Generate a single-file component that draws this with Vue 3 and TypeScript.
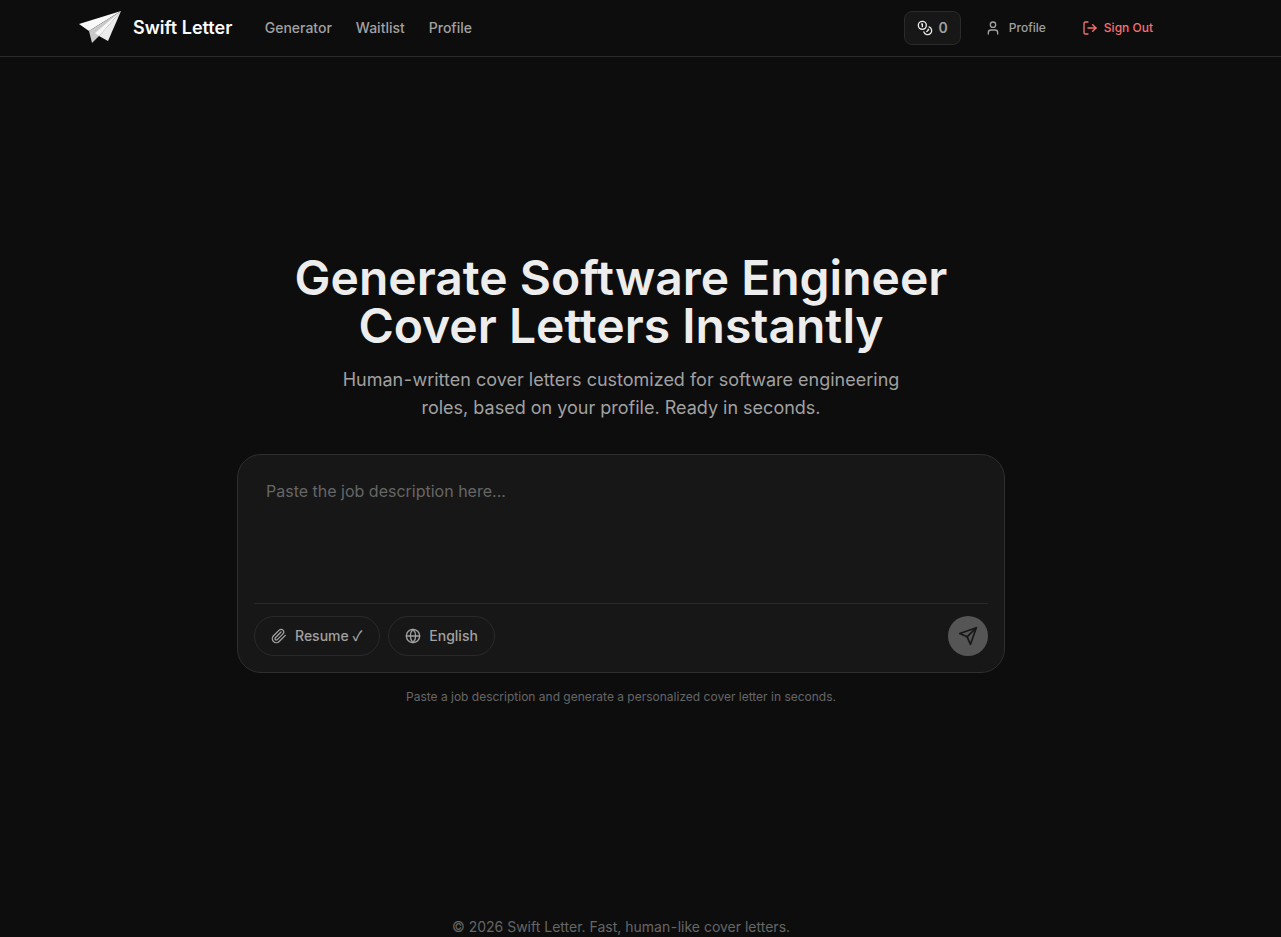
<script setup lang="ts">
const navLinks = ["Generator", "Waitlist", "Profile"];
</script>

<template>
  <div class="page">
    <header class="topbar">
      <div class="topbar-inner">
        <div class="brand">
          <svg class="logo" viewBox="0 0 48 34" width="48" height="34">
            <polygon points="2,13 44,0 12,20" fill="#fafafa" />
            <polygon points="44,0 12,20 15,32 22,25" fill="#c9c9c9" />
            <polygon points="44,0 22,25 31,30" fill="#ececec" />
            <polygon points="44,0 18,22 22,25" fill="#f6f6f6" />
          </svg>
          <span class="brand-name">Swift Letter</span>
        </div>
        <nav class="nav">
          <a v-for="link in navLinks" :key="link" class="nav-link">{{ link }}</a>
        </nav>
        <div class="actions">
          <div class="credits">
            <svg class="icon" viewBox="0 0 24 24" width="16" height="16">
              <circle cx="8" cy="8" r="6" />
              <path d="M18.09 10.37A6 6 0 1 1 10.34 18" />
              <path d="M7 6h1v4" />
              <path d="m16.71 13.88.7.71-2.82 2.82" />
            </svg>
            <span>0</span>
          </div>
          <a class="action-link">
            <svg class="icon" viewBox="0 0 24 24" width="16" height="16">
              <path d="M19 21v-2a4 4 0 0 0-4-4H9a4 4 0 0 0-4 4v2" />
              <circle cx="12" cy="7" r="4" />
            </svg>
            Profile
          </a>
          <a class="action-link danger">
            <svg class="icon" viewBox="0 0 24 24" width="16" height="16">
              <path d="M9 21H5a2 2 0 0 1-2-2V5a2 2 0 0 1 2-2h4" />
              <polyline points="16 17 21 12 16 7" />
              <line x1="21" y1="12" x2="9" y2="12" />
            </svg>
            Sign Out
          </a>
        </div>
      </div>
    </header>

    <main class="main">
      <h1 class="title">Generate Software Engineer<br />Cover Letters Instantly</h1>
      <p class="subtitle">
        Human<span class="hyphen">-</span>written cover letters customized for software engineering<br />
        roles, based on your profile. Ready in seconds.
      </p>

      <div class="composer">
        <textarea class="input" placeholder="Paste the job description here..."></textarea>
        <div class="toolbar">
          <button class="pill">
            <svg class="icon" viewBox="0 0 24 24" width="16" height="16">
              <path d="m21.44 11.05-9.19 9.19a6 6 0 0 1-8.49-8.49l8.57-8.57A4 4 0 1 1 18 8.84l-8.59 8.57a2 2 0 0 1-2.83-2.83l8.49-8.48" />
            </svg>
            <span>Resume <span class="tick">✓</span></span>
          </button>
          <button class="pill">
            <svg class="icon" viewBox="0 0 24 24" width="16" height="16">
              <circle cx="12" cy="12" r="10" />
              <path d="M12 2a14.5 14.5 0 0 0 0 20 14.5 14.5 0 0 0 0-20" />
              <path d="M2 12h20" />
            </svg>
            <span>English</span>
          </button>
          <button class="send">
            <svg class="icon" viewBox="0 0 24 24" width="20" height="20">
              <path d="m22 2-7 20-4-9-9-4Z" />
              <path d="M22 2 11 13" />
            </svg>
          </button>
        </div>
      </div>
      <p class="hint">Paste a job description and generate a personalized cover letter in seconds.</p>
    </main>

    <footer class="footer">© 2026 Swift Letter. Fast, human<span class="hyphen">-</span>like cover letters.</footer>
  </div>
</template>

<style>
html,
body {
  margin: 0;
  background: #0d0d0d;
}
</style>

<style scoped>
.page {
  height: 937px;
  overflow: hidden;
  display: flex;
  flex-direction: column;
  background: #0d0d0d;
  color: #ededed;
  font-family: Inter, "Liberation Sans", sans-serif;
}

.icon {
  fill: none;
  stroke: currentColor;
  stroke-width: 2;
  stroke-linecap: round;
  stroke-linejoin: round;
  flex-shrink: 0;
}

.topbar {
  height: 56px;
  flex-shrink: 0;
  border-bottom: 1px solid #2a2a2a;
}

.topbar-inner {
  width: 1242px;
  height: 100%;
  box-sizing: border-box;
  padding: 0 77px;
  display: flex;
  align-items: center;
}

.brand {
  display: flex;
  align-items: center;
  gap: 8px;
}

.logo {
  display: block;
}

.brand-name {
  font-size: 18px;
  line-height: 28px;
  font-weight: 600;
  color: #fafafa;
}

.nav {
  display: flex;
  gap: 24px;
  margin-left: 32.4px;
}

.nav-link {
  font-size: 14px;
  line-height: 20px;
  font-weight: 500;
  color: #a1a1a1;
}

.actions {
  margin-left: auto;
  display: flex;
  align-items: center;
  gap: 12px;
}

.credits {
  display: flex;
  align-items: center;
  gap: 6px;
  height: 34px;
  box-sizing: border-box;
  padding: 0 12px;
  border: 1px solid #2a2a2a;
  border-radius: 8px;
  background: #171717;
  font-size: 14px;
  line-height: 20px;
  font-weight: 600;
  color: #a1a1a1;
}

.credits .icon {
  color: #ededed;
}

.action-link {
  display: flex;
  align-items: center;
  gap: 8px;
  padding: 8px 12px;
  font-size: 12px;
  line-height: 16px;
  font-weight: 500;
  color: #a1a1a1;
}

.action-link.danger {
  gap: 6px;
  color: #f87171;
}

.main {
  width: 1242px;
  flex: 1;
  display: flex;
  flex-direction: column;
  align-items: center;
  padding-top: 197px;
  box-sizing: border-box;
}

.title {
  margin: 0;
  font-size: 48px;
  line-height: 48px;
  font-weight: 600;
  text-align: center;
  color: #ededed;
}

.subtitle {
  margin: 16px 0 0;
  font-size: 18px;
  line-height: 28px;
  text-align: center;
  color: #a1a1a1;
}

.hyphen {
  padding: 0 0.5px;
}

.composer {
  width: 768px;
  height: 219px;
  box-sizing: border-box;
  margin-top: 32px;
  padding: 16px;
  display: flex;
  flex-direction: column;
  background: #171717;
  border: 1px solid #2e2e2e;
  border-radius: 24px;
}

.input {
  flex: 1;
  resize: none;
  border: 0;
  outline: 0;
  background: transparent;
  padding: 8px 12px 12px;
  font-family: inherit;
  font-size: 16px;
  line-height: 24px;
  color: #ededed;
}

.input::placeholder {
  color: #666;
}

.toolbar {
  display: flex;
  align-items: center;
  gap: 8px;
  padding-top: 12px;
  border-top: 1px solid #2a2a2a;
}

.pill {
  display: flex;
  align-items: center;
  gap: 8px;
  height: 40px;
  padding: 0 16px;
  background: transparent;
  border: 1px solid #2a2a2a;
  border-radius: 999px;
  font-family: inherit;
  font-size: 14px;
  line-height: 20px;
  font-weight: 500;
  color: #a1a1a1;
}

.tick {
  font-family: "Noto Sans CJK SC", sans-serif;
  line-height: 1;
  padding-right: 1px;
}

.send {
  margin-left: auto;
  width: 40px;
  height: 40px;
  padding: 0;
  display: flex;
  align-items: center;
  justify-content: center;
  border: 0;
  border-radius: 50%;
  background: #555;
  color: #171717;
}

.hint {
  margin: 16px 0 0;
  font-size: 12px;
  line-height: 16px;
  color: #666;
}

.footer {
  width: 1242px;
  text-align: center;
  font-size: 14px;
  line-height: 20px;
  color: #666;
}
</style>
